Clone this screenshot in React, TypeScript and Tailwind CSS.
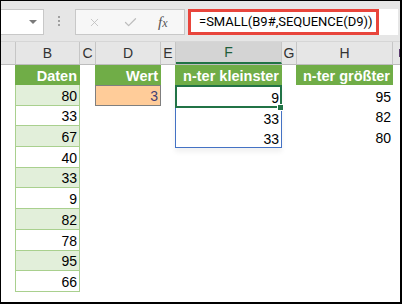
import { X, Check } from "lucide-react";

const data = [80, 33, 67, 40, 33, 9, 82, 78, 95, 66];
const smallest = [9, 33, 33];
const largest = [95, 82, 80];

const cellFont = "font-['Liberation_Sans',Arial,sans-serif]";

function HeaderCell({
  label,
  width,
  active,
}: {
  label: string;
  width: string;
  active?: boolean;
}) {
  return (
    <div
      className={`${width} shrink-0 border-r border-[#c6c6c6] flex items-center justify-center text-[14px] ${
        active ? "bg-[#d4d4d4] border-b-2 border-b-[#217346] text-[#1e5e3a]" : "text-[#333]"
      }`}
    >
      {label}
    </div>
  );
}

function GreenHead({ text }: { text: string }) {
  return (
    <div className="h-[20px] bg-[#70ad47] flex items-end justify-end pr-[3px] pb-[2px] text-white font-bold text-[14.5px] leading-none whitespace-nowrap">
      {text}
    </div>
  );
}

export default function App() {
  return (
    <div
      className={`w-[402px] h-[304px] bg-white border-l border-t border-r-2 border-b-2 border-black overflow-hidden flex flex-col ${cellFont}`}
    >
      {/* formula bar */}
      <div className="h-[40px] shrink-0 bg-[#e6e6e6] flex items-start pt-[8px]">
        <div className="w-[43px] h-[26px] bg-white border border-l-0 border-[#c8c8c8] flex items-center justify-end pr-[6px]">
          <div className="w-0 h-0 border-l-[4px] border-r-[4px] border-t-[4px] border-l-transparent border-r-transparent border-t-[#7a7a7a]" />
        </div>
        <div className="ml-[14px] mt-[7px] flex flex-col gap-[2px]">
          <div className="w-[2px] h-[2px] bg-[#a0a0a0]" />
          <div className="w-[2px] h-[2px] bg-[#a0a0a0]" />
          <div className="w-[2px] h-[2px] bg-[#a0a0a0]" />
        </div>
        <div className="ml-[15px] w-[110px] h-[26px] bg-[#f7f7f7] border border-[#c8c8c8] flex items-center">
          <X size={13} strokeWidth={1.5} className="ml-[12px] text-[#bdbdbd]" />
          <Check size={15} strokeWidth={2} className="ml-[22px] text-[#bdbdbd]" />
          <span className="ml-[20px] font-['Liberation_Serif',serif] italic text-[15px] text-[#555] leading-none">
            f<span className="text-[12px]">x</span>
          </span>
        </div>
        <div className="ml-[3px] flex-1 h-[26px] bg-white mr-[2px]">
          <div className="w-[191px] h-[26px] border-[3px] border-[#e8453c] flex items-center pl-[8px] font-['Roboto',sans-serif] text-[13px] text-black whitespace-nowrap">
            =SMALL(B9#,SEQUENCE(D9))
          </div>
        </div>
      </div>

      {/* column headers */}
      <div className="h-[24px] shrink-0 flex bg-[#e6e6e6] border-t border-[#d6d6d6] border-b border-b-[#bdbdbd]">
        <HeaderCell label="" width="w-[15px]" />
        <HeaderCell label="B" width="w-[64px]" />
        <HeaderCell label="C" width="w-[16px]" />
        <HeaderCell label="D" width="w-[65px]" />
        <HeaderCell label="E" width="w-[15px]" />
        <HeaderCell label="F" width="w-[106px]" active />
        <HeaderCell label="G" width="w-[15px]" />
        <HeaderCell label="H" width="w-[96px]" />
        <div className="flex-1 flex items-center">
          <div className="w-[1px] h-[8px] bg-[#5b3a6e] ml-[6px]" />
        </div>
      </div>

      {/* sheet */}
      <div className="flex flex-1 text-[14px] leading-none text-black">
        <div className="w-[14px] shrink-0" />

        <div className="w-[65px] shrink-0 flex flex-col">
          <GreenHead text="Daten" />
          {data.map((v, i) => (
            <div
              key={i}
              className={`h-[20.7px] border-x border-b border-[#a9d08e] flex items-end justify-end pr-[2px] pb-[2px] ${
                i % 2 === 0 ? "bg-[#e2efda]" : "bg-white"
              }`}
            >
              {v}
            </div>
          ))}
        </div>

        <div className="w-[15px] shrink-0" />

        <div className="w-[66px] shrink-0 flex flex-col">
          <GreenHead text="Wert" />
          <div className="h-[21px] bg-[#ffcc99] border border-[#7f7f7f] flex items-end justify-end pr-[2px] pb-[2px] text-[#3f3f76]">
            3
          </div>
        </div>

        <div className="w-[14px] shrink-0" />

        <div className="w-[107px] shrink-0 flex flex-col">
          <GreenHead text="n-ter kleinster" />
          <div className="relative h-[63px] border border-[#4472c4] shadow-[0_4px_5px_rgba(0,0,0,0.06)]">
            {smallest.map((v, i) => (
              <div key={i} className="h-[20.4px] flex items-end justify-end pr-[2px] pb-[1px]">
                {v}
              </div>
            ))}
            <div className="absolute -left-[1px] -top-[1px] w-[107px] h-[23px] border-2 border-[#217346]" />
            <div className="absolute left-[101px] top-[18px] w-[7px] h-[7px] bg-[#217346] border border-white" />
          </div>
        </div>

        <div className="w-[14px] shrink-0" />

        <div className="w-[97px] shrink-0 flex flex-col">
          <GreenHead text="n-ter größter" />
          {largest.map((v, i) => (
            <div key={i} className="h-[20.7px] flex items-end justify-end pr-[2px] pb-[2px]">
              {v}
            </div>
          ))}
        </div>
      </div>
    </div>
  );
}
